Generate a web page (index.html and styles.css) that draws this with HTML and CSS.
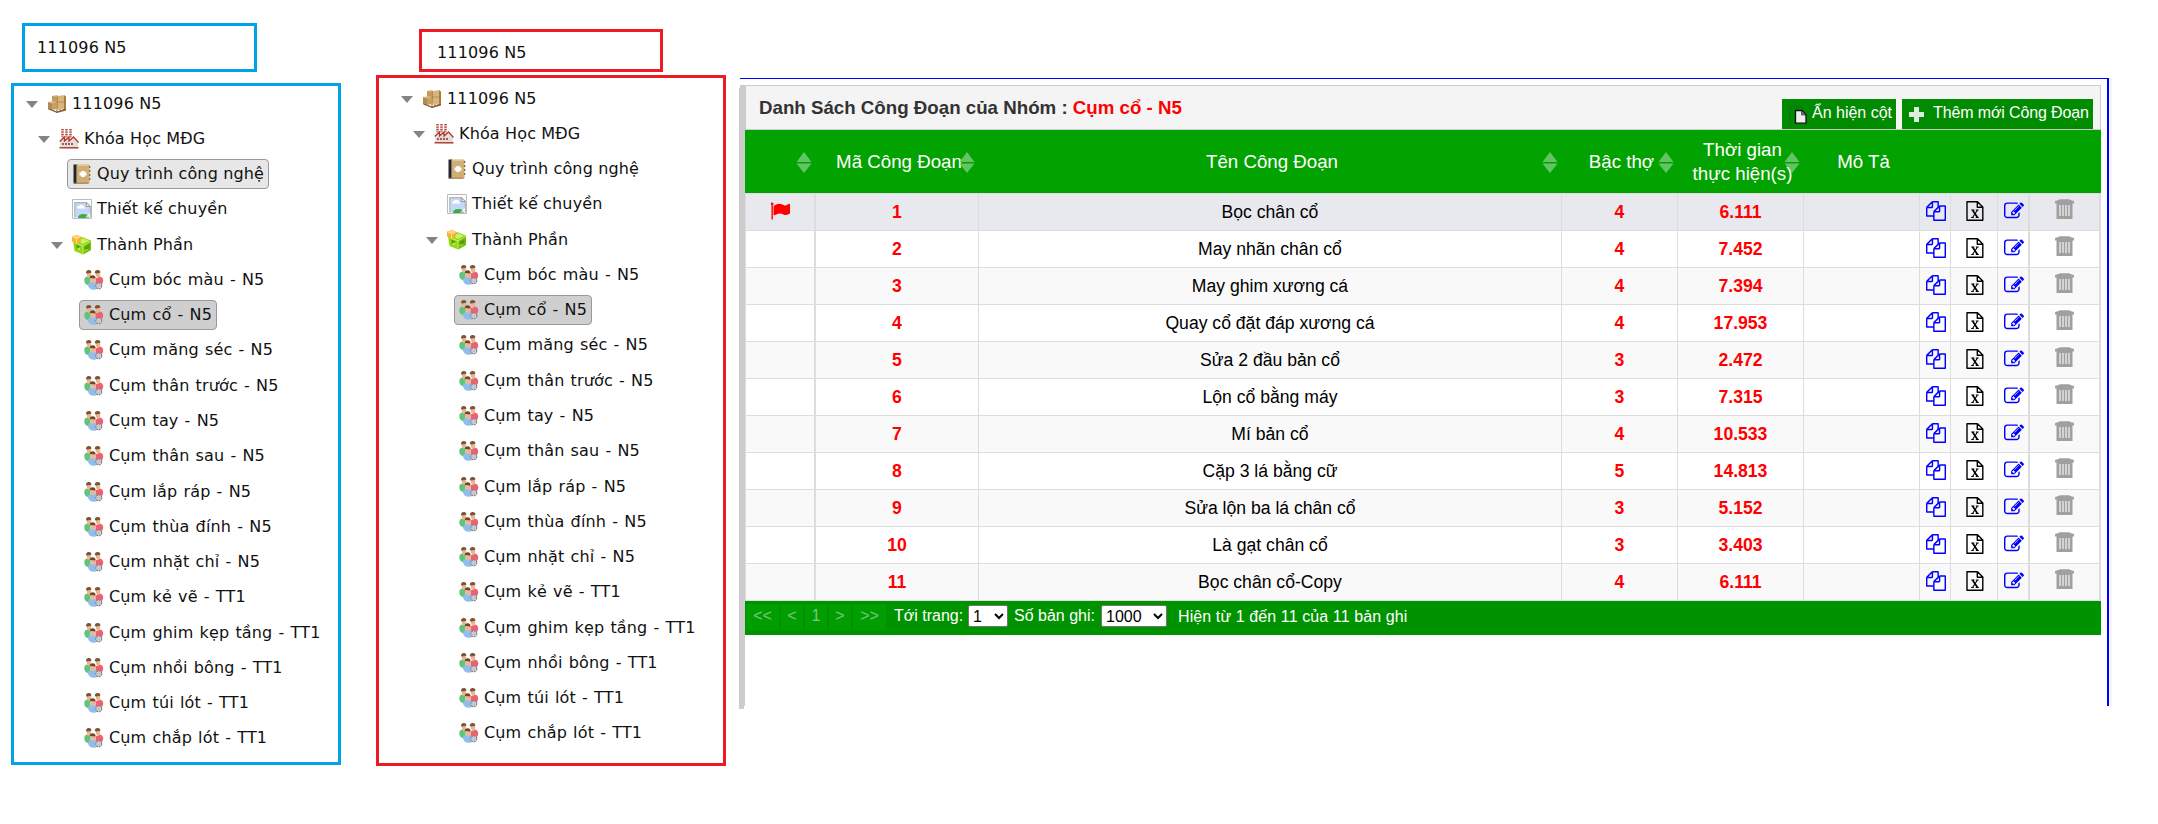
FILE: index.html
```
<!DOCTYPE html>
<html lang="vi">
<head>
<meta charset="utf-8">
<title>Danh Sách Công Đoạn</title>
<link rel="stylesheet" href="styles.css">
</head>
<body>
<svg class="defs" aria-hidden="true">
  <symbol id="arrow" viewBox="0 0 12 7"><path fill="#848484" d="M0 0h12L6 7z"/></symbol>
  <symbol id="boxes" viewBox="0 0 20 20">
    <path fill="#8a6232" d="M1 14l9 4 9-3v1.500l-9 2.500-9-4z"/>
    <path fill="#d9b57c" d="M5 2l5-1 1 1 7-1v13l-8 2-5-3z"/>
    <path fill="#c39a60" d="M5 2l5 1v12l-5-3z"/>
    <path fill="#a57a43" d="M17 1.500l2 1V15l-2 1z"/>
    <path stroke="#9b7340" stroke-width=".6" fill="none" d="M10.500 2v12M10 8h8"/>
    <path fill="#dcb982" d="M1 8l6-1 3 1.500-5 1z"/><path fill="#b48a51" d="M1 8l4 1.500V16l-4-2z"/><path fill="#c79f63" d="M5 9.500l5-1V15l-5 1z"/>
    <path stroke="#7d5a2d" stroke-width=".9" fill="none" d="M1.500 15l8.500 3 9-3M10 15.500v3M13 15v2.500M16 14.500v2"/>
  </symbol>
  <symbol id="factory" viewBox="0 0 20 20">
    <path stroke="#d8ccc8" stroke-width="2.200" d="M3.500 0v9M7.500 0v9M11.500 0v9"/>
    <path stroke="#c0463a" stroke-width="2.400" stroke-dasharray="1.300 1.200" d="M3.500 0v8M7.500 0v8M11.500 0v8"/>
    <path fill="#e5dfdb" d="M1 19v-7l4-3v3l4-3v3l5-3 5 4v7z"/>
    <path stroke="#b8342b" stroke-width="1.300" fill="none" d="M.7 12.500L5.500 8v4L10 8v4l4.500-4 5 5.500"/>
    <path fill="#93605a" d="M3 14h2v2H3zm3 0h2v2H6zm3 0h2v2H9zm3 0h2v2h-2z"/>
    <path fill="#b8453b" d="M.5 18h19v1.500H.5z"/>
  </symbol>
  <symbol id="book" viewBox="0 0 20 20">
    <path fill="#d1ae73" d="M4 .5h12.500a1 1 0 0 1 1 1v17a1 1 0 0 1-1 1H4z"/>
    <path fill="#252525" d="M1.500.5H5v19H1.500z"/><path fill="#999" d="M4.300 1h.8v18h-.8z"/>
    <path stroke="#7d613b" stroke-width="1.200" stroke-dasharray="2 2" d="M17.700 2v16"/>
    <path stroke="#e8d2a7" d="M6 1.200h10"/><path stroke="#9a7a48" d="M2 19.200h14.500"/>
    <path fill="#fff" d="M9.500 7h3l.5 1.500h1.500v3H13L12.500 13h-3L9 11.500H7.500v-3H9z"/>
  </symbol>
  <symbol id="picture" viewBox="0 0 20 20">
    <path fill="#fff" stroke="#bcbcbc" d="M.5.500h19v19H.5z"/>
    <path fill="#c4d9f7" stroke="#b3b3b3" stroke-width="1.200" d="M2.800 18.500V3.600h11.500l4 4v11"/>
    <path fill="#fff" d="M5 9q0-2 2-2 1-2 3-1 2-.5 2 2 1.500.3 1 1.500H5z"/>
    <path fill="#eee" stroke="#9a9a9a" d="M14.300 3.500v4h4z"/>
    <path fill="#3daa42" d="M6 19q0-4 5.500-4 5 0 5.500 4z"/>
    <path fill="#fff" d="M13 18.500l5-5v5z" opacity=".7"/>
  </symbol>
  <symbol id="cube" viewBox="0 0 20 20">
    <path fill="#93d80e" d="M1 6l9-4 9 3.500v9.500l-8 4.500L2.500 16z"/>
    <path fill="#79bd0a" d="M11 10.500l8-5v9.500l-8 4.500z"/>
    <path fill="#c6f36a" d="M5 6l6-2.500 6 2-6 3.500z"/>
    <path fill="#5a9f08" d="M4.500 9.500l4 2v4.500l-4-2zM12.500 12l5-3v4.500l-5 3z"/>
    <path fill="#b9ee55" d="M4.500 14l4-2v4zM12.500 15l5-1.500-5 3z"/>
    <path stroke="#d4f58c" fill="none" stroke-width=".8" d="M2.500 7.500l8.500 3.500v8M11 11l8-5"/>
    <path fill="#fbb02f" d="M0 1.500L4.500 0 9 1.500v5L4.500 8.500 0 6.500z"/><path fill="#ffd67b" d="M.5 1.700L4.500.4l4 1.300-4 1.600z"/><path stroke="#fff0c8" stroke-width=".7" fill="none" d="M.5 2l4 1.500 4-1.500M4.500 3.500v4.500"/>
  </symbol>
  <symbol id="people" viewBox="0 0 20 20">
    <path fill="#62c47c" d="M.3 10q0-3 2.700-3.500L6.500 8v6l-2 1.500Q0 14 .3 10z"/>
    <path fill="#ee6170" d="M11.500 8.500L16 6.500q3 .5 3.200 4 0 3-2.200 4l-5.500-1z"/>
    <path fill="#e9b690" d="M2.500 2H7q1 5-2 6Q2.500 7 2.500 2zM11.500 2H16q1 5-2 6-2.500-1-2.500-6z"/>
    <path fill="#7d5433" d="M2 3Q2 0 5 .1 7.500.3 7.300 2.800L3 3.500zM10.800 3q0-3 3-2.900 2.800.2 2.500 2.700l-4 .7z"/>
    <path fill="#91bdec" d="M4 15q0-3 4-3.500 5 0 6 4 .5 4-4 4.300-5.500 0-6-4.800z"/>
    <path fill="#eab791" d="M6.300 7.500h5q.6 5-2.300 6-2.700-1-2.700-6z"/>
    <path fill="#6e4628" d="M5.700 8.300q0-3 3-3.100 3.100.2 2.800 3.200l-4.500-.4z"/>
    <circle cx="14.800" cy="15.800" r="2.900" fill="#eee" stroke="#858591" stroke-width="1.300" stroke-dasharray="2 .6"/>
    <circle cx="14.800" cy="15.800" r="1.100" fill="#fff" stroke="#85858f" stroke-width=".7"/>
  </symbol>
  <symbol id="sort" viewBox="0 0 16 21"><path fill="#62c462" d="M8 0l7.500 10H.5zM.5 11.500h15L8 21z"/></symbol>
  <symbol id="flag" viewBox="0 0 1792 1792"><path d="M320 256q0 72-64 110v1266q0 13-9.500 22.500t-22.500 9.500h-64q-13 0-22.500-9.500t-9.500-22.500v-1266q-64-38-64-110 0-53 37.500-90.500t90.500-37.500 90.500 37.500 37.500 90.500zm1472 64v763q0 25-12.500 38.500t-39.500 27.500q-215 116-369 116-61 0-123.500-22t-108.500-48-115.500-48-142.500-22q-192 0-464 146-17 9-33 9-26 0-45-19t-19-45v-742q0-32 31-55 21-14 79-43 236-120 421-120 107 0 200 29t219 88q38 19 88 19 54 0 117.500-21t110-47 88-47 54.500-21q26 0 45 19t19 45z"/></symbol>
  <symbol id="copy" viewBox="0 0 1792 1792"><path d="M1696 384q40 0 68 28t28 68v1216q0 40-28 68t-68 28h-960q-40 0-68-28t-28-68v-288h-544q-40 0-68-28t-28-68v-672q0-40 20-88t48-76l408-408q28-28 76-48t88-20h416q40 0 68 28t28 68v328q68-40 128-40h416zm-544 213l-299 299h299v-299zm-640-384l-299 299h299v-299zm196 647l316-316v-416h-384v416q0 40-28 68t-68 28h-416v640h512v-256q0-40 20-88t48-76zm956 804v-1152h-384v416q0 40-28 68t-68 28h-416v640h896z"/></symbol>
  <symbol id="excel" viewBox="0 0 18 20"><path fill="none" stroke="currentColor" stroke-width="1.400" stroke-linejoin="round" d="M1 .8h10.500L16.800 6v13.200H1zM11.300 1v5.300h5.500"/><path fill="none" stroke="currentColor" stroke-width="1.700" d="M6.500 9l5 7.500"/><path fill="none" stroke="currentColor" stroke-width="1.100" d="M11.500 9l-5 7.500M5.300 9h3M9.800 9h2.800M5.200 16.500h2.600M9.800 16.500h3"/></symbol>
  <symbol id="edit" viewBox="0 0 1792 1792"><path d="M888 1184l116-116-152-152-116 116v56h96v96h56zm440-720q-16-16-33 1l-350 350q-17 17-1 33t33-1l350-350q17-17 1-33zm80 594v190q0 119-84.500 203.500t-203.500 84.500h-832q-119 0-203.500-84.500t-84.500-203.500v-832q0-119 84.500-203.500t203.500-84.500h832q63 0 117 25 15 7 18 23 3 17-9 29l-49 49q-14 14-32 8-23-6-45-6h-832q-66 0-113 47t-47 113v832q0 66 47 113t113 47h832q66 0 113-47t47-113v-126q0-13 9-22l64-64q15-15 35-7t20 29zm-96-738l288 288-672 672h-288v-288zm444 132l-92 92-288-288 92-92q28-28 68-28t68 28l152 152q28 28 28 68t-28 68z"/></symbol>
  <symbol id="trash" viewBox="0 0 19 20"><path fill="#a0a0a0" d="M0 2.500q0-1 2-1L5 .3h9l3 1.200q2 0 2 1V4.500H0zM1.500 4.500h16V20h-16z"/><path stroke="#eee" stroke-width="1.300" d="M5 6v11M8 6v11M11 6v11M14 6v11"/></symbol>
  <symbol id="columns" viewBox="0 0 18 18"><path fill="none" stroke="#245d24" stroke-dasharray="2 1.300" d="M.8 14V.8H13V4M1 14h5"/><path fill="#eee" stroke="#111" stroke-width="1.300" d="M6.500 4.500h6.500l4 4v8.700H6.500z"/><path fill="#777" stroke="#222" stroke-width=".6" d="M12.500 4.500v4.500H17z"/></symbol>
  <symbol id="plus" viewBox="0 0 15 15"><path fill="#deebde" d="M5 0h5v5h5v5h-5v5H5v-5H0V5h5z"/></symbol>
</svg>

<main class="board">
  <section class="col-blue">
    <div class="name blue">111096 N5</div>
    <ul class="tree blue">
      <li><svg class="tw"><use href="#arrow"/></svg><span class="node"><svg class="ic"><use href="#boxes"/></svg>111096 N5</span></li>
      <li class="l1"><svg class="tw"><use href="#arrow"/></svg><span class="node"><svg class="ic"><use href="#factory"/></svg>Khóa Học MĐG</span></li>
      <li class="l2"><span class="node hover"><svg class="ic"><use href="#book"/></svg>Quy trình công nghệ</span></li>
      <li class="l2"><span class="node"><svg class="ic"><use href="#picture"/></svg>Thiết kế chuyền</span></li>
      <li class="l2"><svg class="tw"><use href="#arrow"/></svg><span class="node"><svg class="ic"><use href="#cube"/></svg>Thành Phần</span></li>
      <li class="l3"><span class="node"><svg class="ic"><use href="#people"/></svg>Cụm bóc màu - N5</span></li>
      <li class="l3"><span class="node active"><svg class="ic"><use href="#people"/></svg>Cụm cổ - N5</span></li>
      <li class="l3"><span class="node"><svg class="ic"><use href="#people"/></svg>Cụm măng séc - N5</span></li>
      <li class="l3"><span class="node"><svg class="ic"><use href="#people"/></svg>Cụm thân trước - N5</span></li>
      <li class="l3"><span class="node"><svg class="ic"><use href="#people"/></svg>Cụm tay - N5</span></li>
      <li class="l3"><span class="node"><svg class="ic"><use href="#people"/></svg>Cụm thân sau - N5</span></li>
      <li class="l3"><span class="node"><svg class="ic"><use href="#people"/></svg>Cụm lắp ráp - N5</span></li>
      <li class="l3"><span class="node"><svg class="ic"><use href="#people"/></svg>Cụm thùa đính - N5</span></li>
      <li class="l3"><span class="node"><svg class="ic"><use href="#people"/></svg>Cụm nhặt chỉ - N5</span></li>
      <li class="l3"><span class="node"><svg class="ic"><use href="#people"/></svg>Cụm kẻ vẽ - TT1</span></li>
      <li class="l3"><span class="node"><svg class="ic"><use href="#people"/></svg>Cụm ghim kẹp tầng - TT1</span></li>
      <li class="l3"><span class="node"><svg class="ic"><use href="#people"/></svg>Cụm nhồi bông - TT1</span></li>
      <li class="l3"><span class="node"><svg class="ic"><use href="#people"/></svg>Cụm túi lót - TT1</span></li>
      <li class="l3"><span class="node"><svg class="ic"><use href="#people"/></svg>Cụm chắp lót - TT1</span></li>
    </ul>
  </section>

  <section class="col-red">
    <div class="name red">111096 N5</div>
    <ul class="tree red">
      <li><svg class="tw"><use href="#arrow"/></svg><span class="node"><svg class="ic"><use href="#boxes"/></svg>111096 N5</span></li>
      <li class="l1"><svg class="tw"><use href="#arrow"/></svg><span class="node"><svg class="ic"><use href="#factory"/></svg>Khóa Học MĐG</span></li>
      <li class="l2"><span class="node"><svg class="ic"><use href="#book"/></svg>Quy trình công nghệ</span></li>
      <li class="l2"><span class="node"><svg class="ic"><use href="#picture"/></svg>Thiết kế chuyền</span></li>
      <li class="l2"><svg class="tw"><use href="#arrow"/></svg><span class="node"><svg class="ic"><use href="#cube"/></svg>Thành Phần</span></li>
      <li class="l3"><span class="node"><svg class="ic"><use href="#people"/></svg>Cụm bóc màu - N5</span></li>
      <li class="l3"><span class="node active"><svg class="ic"><use href="#people"/></svg>Cụm cổ - N5</span></li>
      <li class="l3"><span class="node"><svg class="ic"><use href="#people"/></svg>Cụm măng séc - N5</span></li>
      <li class="l3"><span class="node"><svg class="ic"><use href="#people"/></svg>Cụm thân trước - N5</span></li>
      <li class="l3"><span class="node"><svg class="ic"><use href="#people"/></svg>Cụm tay - N5</span></li>
      <li class="l3"><span class="node"><svg class="ic"><use href="#people"/></svg>Cụm thân sau - N5</span></li>
      <li class="l3"><span class="node"><svg class="ic"><use href="#people"/></svg>Cụm lắp ráp - N5</span></li>
      <li class="l3"><span class="node"><svg class="ic"><use href="#people"/></svg>Cụm thùa đính - N5</span></li>
      <li class="l3"><span class="node"><svg class="ic"><use href="#people"/></svg>Cụm nhặt chỉ - N5</span></li>
      <li class="l3"><span class="node"><svg class="ic"><use href="#people"/></svg>Cụm kẻ vẽ - TT1</span></li>
      <li class="l3"><span class="node"><svg class="ic"><use href="#people"/></svg>Cụm ghim kẹp tầng - TT1</span></li>
      <li class="l3"><span class="node"><svg class="ic"><use href="#people"/></svg>Cụm nhồi bông - TT1</span></li>
      <li class="l3"><span class="node"><svg class="ic"><use href="#people"/></svg>Cụm túi lót - TT1</span></li>
      <li class="l3"><span class="node"><svg class="ic"><use href="#people"/></svg>Cụm chắp lót - TT1</span></li>
    </ul>
  </section>

  <section class="panel">
    <div class="inner">
      <header class="title">
        <h1>Danh Sách Công Đoạn của Nhóm : <b>Cụm cổ - N5</b></h1>
        <div class="btn"><svg class="i-cols"><use href="#columns"/></svg>Ẩn hiện cột</div>
        <div class="btn add"><svg class="i-plus"><use href="#plus"/></svg>Thêm mới Công Đoạn</div>
      </header>
      <div class="row head">
        <div><svg class="sort"><use href="#sort"/></svg></div>
        <div>Mã Công Đoạn<svg class="sort"><use href="#sort"/></svg></div>
        <div>Tên Công Đoạn<svg class="sort"><use href="#sort"/></svg></div>
        <div>Bậc thợ<svg class="sort"><use href="#sort"/></svg></div>
        <div class="time"><svg class="sort"><use href="#sort"/></svg><span>Thời gian<br>thực hiện(s)</span></div>
        <div>Mô Tả</div>
      </div>
      <div class="body">
        <div class="row"><div><svg class="flag"><use href="#flag"/></svg></div><div class="n">1</div><div>Bọc chân cổ</div><div class="n">4</div><div class="n">6.111</div><div></div><div><svg class="cp"><use href="#copy"/></svg></div><div><svg class="xl"><use href="#excel"/></svg></div><div><svg class="ed"><use href="#edit"/></svg></div><div><svg class="tr"><use href="#trash"/></svg></div></div>
        <div class="row"><div></div><div class="n">2</div><div>May nhãn chân cổ</div><div class="n">4</div><div class="n">7.452</div><div></div><div><svg class="cp"><use href="#copy"/></svg></div><div><svg class="xl"><use href="#excel"/></svg></div><div><svg class="ed"><use href="#edit"/></svg></div><div><svg class="tr"><use href="#trash"/></svg></div></div>
        <div class="row"><div></div><div class="n">3</div><div>May ghim xương cá</div><div class="n">4</div><div class="n">7.394</div><div></div><div><svg class="cp"><use href="#copy"/></svg></div><div><svg class="xl"><use href="#excel"/></svg></div><div><svg class="ed"><use href="#edit"/></svg></div><div><svg class="tr"><use href="#trash"/></svg></div></div>
        <div class="row"><div></div><div class="n">4</div><div>Quay cổ đặt đáp xương cá</div><div class="n">4</div><div class="n">17.953</div><div></div><div><svg class="cp"><use href="#copy"/></svg></div><div><svg class="xl"><use href="#excel"/></svg></div><div><svg class="ed"><use href="#edit"/></svg></div><div><svg class="tr"><use href="#trash"/></svg></div></div>
        <div class="row"><div></div><div class="n">5</div><div>Sửa 2 đầu bản cổ</div><div class="n">3</div><div class="n">2.472</div><div></div><div><svg class="cp"><use href="#copy"/></svg></div><div><svg class="xl"><use href="#excel"/></svg></div><div><svg class="ed"><use href="#edit"/></svg></div><div><svg class="tr"><use href="#trash"/></svg></div></div>
        <div class="row"><div></div><div class="n">6</div><div>Lộn cổ bằng máy</div><div class="n">3</div><div class="n">7.315</div><div></div><div><svg class="cp"><use href="#copy"/></svg></div><div><svg class="xl"><use href="#excel"/></svg></div><div><svg class="ed"><use href="#edit"/></svg></div><div><svg class="tr"><use href="#trash"/></svg></div></div>
        <div class="row"><div></div><div class="n">7</div><div>Mí bản cổ</div><div class="n">4</div><div class="n">10.533</div><div></div><div><svg class="cp"><use href="#copy"/></svg></div><div><svg class="xl"><use href="#excel"/></svg></div><div><svg class="ed"><use href="#edit"/></svg></div><div><svg class="tr"><use href="#trash"/></svg></div></div>
        <div class="row"><div></div><div class="n">8</div><div>Cặp 3 lá bằng cữ</div><div class="n">5</div><div class="n">14.813</div><div></div><div><svg class="cp"><use href="#copy"/></svg></div><div><svg class="xl"><use href="#excel"/></svg></div><div><svg class="ed"><use href="#edit"/></svg></div><div><svg class="tr"><use href="#trash"/></svg></div></div>
        <div class="row"><div></div><div class="n">9</div><div>Sửa lộn ba lá chân cổ</div><div class="n">3</div><div class="n">5.152</div><div></div><div><svg class="cp"><use href="#copy"/></svg></div><div><svg class="xl"><use href="#excel"/></svg></div><div><svg class="ed"><use href="#edit"/></svg></div><div><svg class="tr"><use href="#trash"/></svg></div></div>
        <div class="row"><div></div><div class="n">10</div><div>Là gạt chân cổ</div><div class="n">3</div><div class="n">3.403</div><div></div><div><svg class="cp"><use href="#copy"/></svg></div><div><svg class="xl"><use href="#excel"/></svg></div><div><svg class="ed"><use href="#edit"/></svg></div><div><svg class="tr"><use href="#trash"/></svg></div></div>
        <div class="row"><div></div><div class="n">11</div><div>Bọc chân cổ-Copy</div><div class="n">4</div><div class="n">6.111</div><div></div><div><svg class="cp"><use href="#copy"/></svg></div><div><svg class="xl"><use href="#excel"/></svg></div><div><svg class="ed"><use href="#edit"/></svg></div><div><svg class="tr"><use href="#trash"/></svg></div></div>
      </div>
      <footer class="pager">
        <span class="pg w33">&lt;&lt;</span><span class="pg">&lt;</span><span class="pg">1</span><span class="pg">&gt;</span><span class="pg w33">&gt;&gt;</span>
        <label class="goto">Tới trang:</label><select class="s1"><option>1</option></select>
        <label class="size">Số bản ghi:</label><select class="s2"><option>1000</option></select>
        <span class="info">Hiện từ 1 đến 11 của 11 bản ghi</span>
      </footer>
    </div>
  </section>
</main>
</body>
</html>
```
FILE: styles.css
```
* { box-sizing: border-box; }
body { margin: 0; background: #fff; color: #000; font-family: "Liberation Sans", Arial, sans-serif; }
svg { display: block; flex: none; }
.defs { position: absolute; width: 0; height: 0; }

.board { display: flex; align-items: flex-start; width: 2158px; height: 824px; overflow: hidden; }
.col-blue { width: 330px; margin: 23px 0 0 11px; }
.col-red { width: 350px; margin: 29px 0 0 35px; }

/* Tree panels */
.name, .tree { font: 16px/20px "DejaVu Sans", Verdana, sans-serif; letter-spacing: .15px; color: #111; }
.name { display: flex; align-items: center; border: 3px solid; }
.name.blue { width: 235px; height: 49px; margin-left: 11px; padding: 0 0 0 12px; border-color: #00a2e8; }
.name.red { width: 244px; height: 43px; margin-left: 43px; padding: 4px 0 0 15px; border-color: #ed1c24; }
.tree { margin: 0; list-style: none; border: 3px solid; }
.tree.blue { height: 682px; margin-top: 11px; padding: 0 0 0 8px; border-color: #00a2e8; }
.tree.red { height: 691px; margin-top: 3px; padding: 3px 0 0 18px; border-color: #ed1c24; }
.tree li { display: flex; align-items: center; height: 35.28px; padding-left: 20px; }
.tree .l1 { padding-left: 32px; }
.tree .l2 { padding-left: 45px; }
.tree .l3 { padding-left: 57px; word-spacing: .9px; }
.tw { width: 12px; height: 7px; margin: 1px 0 0 -16px; }
.tw + .node { margin-left: 4px; }
.node { display: flex; align-items: center; height: 30px; padding: 0 4px; border: 1px solid transparent; border-radius: 4px; white-space: nowrap; }
.ic { width: 20px; height: 20px; margin-right: 5px; }
.hover { background: #e7e7e7; border-color: #999; }
.active { background: #cfcfcf; border-color: #999; }

/* Operations list */
.panel { width: 1373px; height: 631px; margin: 78px 0 0 13px; padding-top: 7px; background: linear-gradient(#00f, #00f) 1px 0 / 1369px 1px no-repeat, linear-gradient(#00f, #00f) 1368px 0 / 2px 628px no-repeat, linear-gradient(#f5f5fb, #f5f5fb) 1370px 0 / 3px 628px no-repeat, linear-gradient(#ccc, #ccc) 0 10px / 5px 621px no-repeat, linear-gradient(#ccc, #ccc) 1px 7px / 5px 621px no-repeat; }
.inner { width: 1356px; margin-left: 6px; }
.title { display: flex; align-items: flex-end; height: 45px; padding-right: 7px; background: #f4f4f4; border: 1px solid #ccc; }
.title h1 { flex: 1; margin: 0; padding-left: 13px; align-self: center; font-size: 18.72px; line-height: 43px; height: 44px; color: #333; white-space: nowrap; }
.title b { color: red; }
.btn { display: flex; align-items: center; height: 30px; width: 114px; padding: 0 0 2px 7px; background: #008b00; color: #fff; font-size: 16px; white-space: nowrap; }
.btn.add { width: 191px; margin-left: 6px; letter-spacing: -.13px; }
.i-cols { width: 18px; height: 18px; margin: 4px 5px 0 0; }
.i-plus { width: 15px; height: 15px; margin: 2px 9px 0 0; }
.row { display: grid; grid-template-columns: 71px 163px 583px 116px 126px 116px 31px 47px 32px 71px; }
.row > div { display: flex; align-items: center; justify-content: center; position: relative; }
.head { height: 63px; background: #02a301; color: #fff; font-size: 18.72px; text-align: center; line-height: 24px; }
.head > div { padding-left: 3px; white-space: nowrap; }
.sort { position: absolute; right: 4px; top: 22px; width: 16px; height: 21px; }
.time span { position: relative; }
.body { border-left: 1px solid #ddd; border-top: 1px solid #ddd; font-size: 17.6px; }
.body .row { height: 37px; margin-left: -1px; background: #fff; }
.body .row:nth-child(odd) { background: #f9f9f9; }
.body .row:first-child { background: #e8e9ee; }
.body .row > div { border-right: 1px solid #ddd; border-bottom: 1px solid #ddd; }
.body .row > div:first-child { border-left: 1px solid #ddd; }
.body .row > div:first-child, .body .row > div:nth-child(9), .body .row > div:nth-child(10) { border-right-width: 2px; }
.body .n { color: red; font-weight: bold; }
.flag { width: 20px; height: 20px; margin: 0 0 3px 0; fill: red; }
.cp, .ed { width: 20px; height: 20px; margin: 0 0 2px 1px; fill: #00f; }
.xl { width: 18px; height: 20px; margin: 0 0 2px 1px; }
.tr { width: 19px; height: 20px; margin: 0 0 6px 0; }

.pager { display: flex; align-items: flex-start; height: 34px; padding: 3px 0 0 1px; background: #009300; color: #fff; font-size: 16px; line-height: 24px; white-space: nowrap; }
.pg { width: 22px; height: 26px; margin-right: 2px; background: #009e00; color: #80c580; text-align: center; }
.w33 { width: 33px; }
.goto { width: 74px; margin-left: 6px; }
.size { width: 87px; margin-left: 6px; }
.pager select { height: 22px; margin: 1px 0 0; padding: 0; font: 16px "Liberation Sans", Arial, sans-serif; color: #000; background-color: #fff; border: 1px solid #767676; border-radius: 2px; }
.s1 { width: 40px; }
.s2 { width: 66px; }
.info { margin: 1px 0 0 11px; letter-spacing: .1px; }
```
